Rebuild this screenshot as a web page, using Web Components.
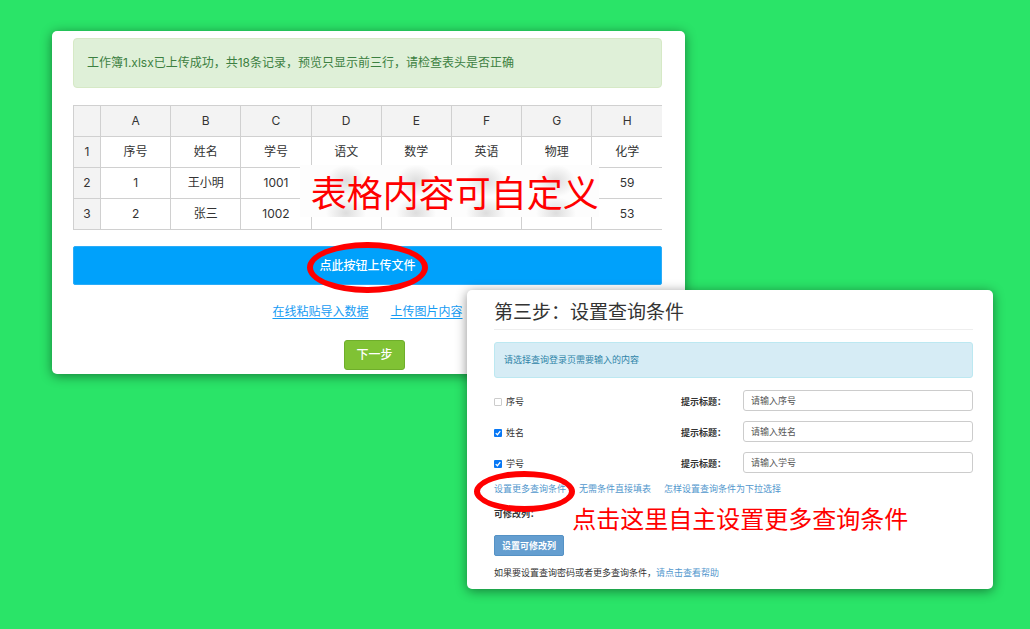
<!DOCTYPE html>
<html lang="zh-CN">
<head>
<meta charset="utf-8">
<meta name="viewport" content="width=device-width, initial-scale=1">
<title>上传数据与设置查询条件</title>
<style>
  body { margin: 0; min-height: 100vh; background: #2ae468; color: #333;
    font: 12px/20px Inter, "Noto Sans CJK SC", sans-serif; }
</style>
</head>
<body>
<guide-stage>
  <guide-card slot="back"><upload-step></upload-step></guide-card>
  <guide-card slot="front"><query-step></query-step></guide-card>
</guide-stage>
<script>
const define = (name, html, setup) => customElements.define(name, class extends HTMLElement {
  connectedCallback() {
    if (this.shadowRoot) return;
    const t = document.createElement('template');
    t.innerHTML = '<style>*{box-sizing:border-box}</style>' + html;
    const root = this.attachShadow({ mode: 'open' });
    root.append(t.content.cloneNode(true));
    if (setup) setup(this, root);
  }
});

define('guide-stage', `
<style>
  :host { display: grid; grid-template-columns: 415fr 218fr 308fr; align-items: start; padding: 31px 37px 40px 52px; }
  ::slotted([slot=back]) { grid-area: 1 / 1 / 2 / 3; }
  ::slotted([slot=front]) { grid-area: 1 / 2 / 2 / 4; margin-top: 259px; z-index: 1; }
</style>
<slot name="back"></slot><slot name="front"></slot>`);

define('guide-card', `
<style>
  :host { display: block; min-width: 0; background: #fff; border-radius: 5px; box-shadow: 0 2px 12px rgba(0,0,0,.45); }
</style>
<slot></slot>`);

define('alert-box', `
<style>
  :host { display: block; padding: 14px 13px; border: 1px solid #d6e9c6; border-radius: 4px; background: #dff0d8; color: #3c8041; }
  :host([kind=info]) { padding: 10px 9px; border-color: #bce8f1; border-radius: 3px; background: #d6ecf5; color: #2f84a8; line-height: 14px; }
</style>
<slot></slot>`);

/* Hand-drawn style ring laid over the text it points out */
define('red-ring', `
<style>
  :host { position: absolute; inset: var(--ring); border: 6px solid #f00; border-radius: 50%; pointer-events: none; z-index: 1; }
</style>`);

define('sheet-preview', `
<style>
  :host { display: block; position: relative; overflow: hidden; }
  table { width: 100%; table-layout: fixed; border-collapse: collapse; }
  th, td { height: 31px; padding: 0; border: 1px solid #d0d0d0; text-align: center; font-weight: 400; }
  th { background: #f3f3f3; }
  th:first-child { width: 27px; }
  tr > :last-child { border-right: 0; }
  .note { position: absolute; top: 60px; left: 38.5%; height: 52px; padding: 3px 0 0 11px;
    color: #f00; font-size: 36px; line-height: 52px; white-space: nowrap; background: #fdfdfd; overflow: hidden; }
  .note span { position: relative; }
  .smudge { position: absolute; inset: 0; display: grid; grid-template: 32px 32px / repeat(4, 70px); justify-items: center; padding-left: 11px; }
  .smudge i { width: 40px; background: radial-gradient(closest-side, #ddd, #fdfdfd00); }
</style>
<table><thead></thead><tbody></tbody></table>
<div class="note"><div class="smudge"></div><span>表格内容可自定义</span></div>`, (host, root) => {
  root.querySelector('thead').innerHTML = '<tr><th></th>' + [...'ABCDEFGH'].map(c => `<th scope="col">${c}</th>`).join('') + '</tr>';
  const rows = [
    ['序号', '姓名', '学号', '语文', '数学', '英语', '物理', '化学'],
    ['1', '王小明', '1001', '', '', '', '', '59'],
    ['2', '张三', '1002', '', '', '', '', '53']
  ];
  root.querySelector('tbody').innerHTML = rows.map((r, i) =>
    `<tr><th scope="row">${i + 1}</th>${r.map(c => `<td>${c}</td>`).join('')}</tr>`).join('');
  root.querySelector('.smudge').innerHTML = '<i></i>'.repeat(8);
});

define('upload-step', `
<style>
  :host { display: flex; flex-direction: column; padding: 7px 23px 4px 21px; }
  alert-box { margin-bottom: 17px; }
  button { font: inherit; font-weight: 500; color: #fff; cursor: pointer; }
  .upload { height: 39px; margin-top: 16px; padding: 0; border: 1px solid #2bacf8; border-radius: 2px; background: #00a1fb; }
  .ringed { position: relative; --ring: -14px -12px -17px -12px; display: inline-block; }
  .links { display: flex; justify-content: center; gap: 22px; margin: 17px 0 18px; }
  a { color: #159bf3; text-decoration: underline; text-underline-offset: 2px; }
  .next { align-self: center; height: 30px; padding: 0 11px; border: 1px solid #6fae2b; border-radius: 3px; background: #80c234; margin-left: 14px; }
</style>
<alert-box>工作簿1.xlsx已上传成功，共18条记录，预览只显示前三行，请检查表头是否正确</alert-box>
<sheet-preview></sheet-preview>
<button class="upload" type="button"><span class="ringed">点此按钮上传文件<red-ring></red-ring></span></button>
<nav class="links"><a href="#paste">在线粘贴导入数据</a><a href="#image">上传图片内容</a></nav>
<button class="next" type="button">下一步</button>`);

define('query-row', `
<style>
  :host { display: grid; grid-template-columns: 187fr 62fr 230fr; align-items: center; }
  .pick { display: flex; align-items: center; gap: 4px; padding-top: 2px; }
  .pick input { appearance: none; width: 8px; height: 8px; margin: 0; border: 1px solid #ccc; border-radius: 1px; background: #fff; }
  .pick input:checked { border: 0; background: #0878f5 url("data:image/svg+xml,%3Csvg xmlns='http://www.w3.org/2000/svg' viewBox='0 0 7 7'%3E%3Cpath d='M1.5 3.6 3 5 5.5 1.8' fill='none' stroke='white' stroke-width='1.1'/%3E%3C/svg%3E"); }
  .hint { font-weight: 700; padding-top: 2px; }
  .text { width: 100%; min-width: 0; height: 21px; padding: 0 7px; border: 1px solid #ccc; border-radius: 3px; font: inherit; color: #555; background: #fff; }
</style>
<label class="pick"><input type="checkbox"><span></span></label>
<label class="hint" for="t">提示标题：</label>
<input class="text" id="t" type="text">`, (host, root) => {
  const name = host.getAttribute('name');
  root.querySelector('.pick span').textContent = name;
  root.querySelector('.pick input').checked = host.hasAttribute('checked');
  root.querySelector('.text').value = '请输入' + name;
});

define('query-step', `
<style>
  :host { display: block; position: relative; padding: 7px 20px 9px 27px; font-size: 9px; line-height: 14px; }
  h2 { margin: 0 0 12px; border-bottom: 1px solid #eee; font-size: 19px; line-height: 32px; font-weight: 400; }
  .rows { display: grid; gap: 10px; margin: 12px 0 9px; }
  a { color: #5297cd; text-decoration: none; }
  .links { display: flex; gap: 13px; }
  .ringed { position: relative; --ring: -11px -9px -16px -20px; }
  .cols { margin: 11px 0 14px; font-weight: 700; }
  .note { position: absolute; left: 20%; top: 212px; margin: 0; color: #f00; font-size: 24px; line-height: 36px; white-space: nowrap; }
  button { height: 21px; padding: 0 7px; border: 1px solid #5592c5; border-radius: 2px; background: #649ed0; color: #fff; font: inherit; font-weight: 700; display: block; }
  .help { margin: 10px 0 0; }
</style>
<h2>第三步：设置查询条件</h2>
<alert-box kind="info">请选择查询登录页需要输入的内容</alert-box>
<div class="rows">
  <query-row name="序号"></query-row>
  <query-row name="姓名" checked></query-row>
  <query-row name="学号" checked></query-row>
</div>
<nav class="links">
  <span class="ringed"><a href="#more">设置更多查询条件</a><red-ring></red-ring></span>
  <a href="#none">无需条件直接填表</a>
  <a href="#select">怎样设置查询条件为下拉选择</a>
</nav>
<div class="cols">可修改列：</div>
<p class="note">点击这里自主设置更多查询条件</p>
<button type="button">设置可修改列</button>
<p class="help">如果要设置查询密码或者更多查询条件，<a href="#help">请点击查看帮助</a></p>`);
</script>
</body>
</html>
